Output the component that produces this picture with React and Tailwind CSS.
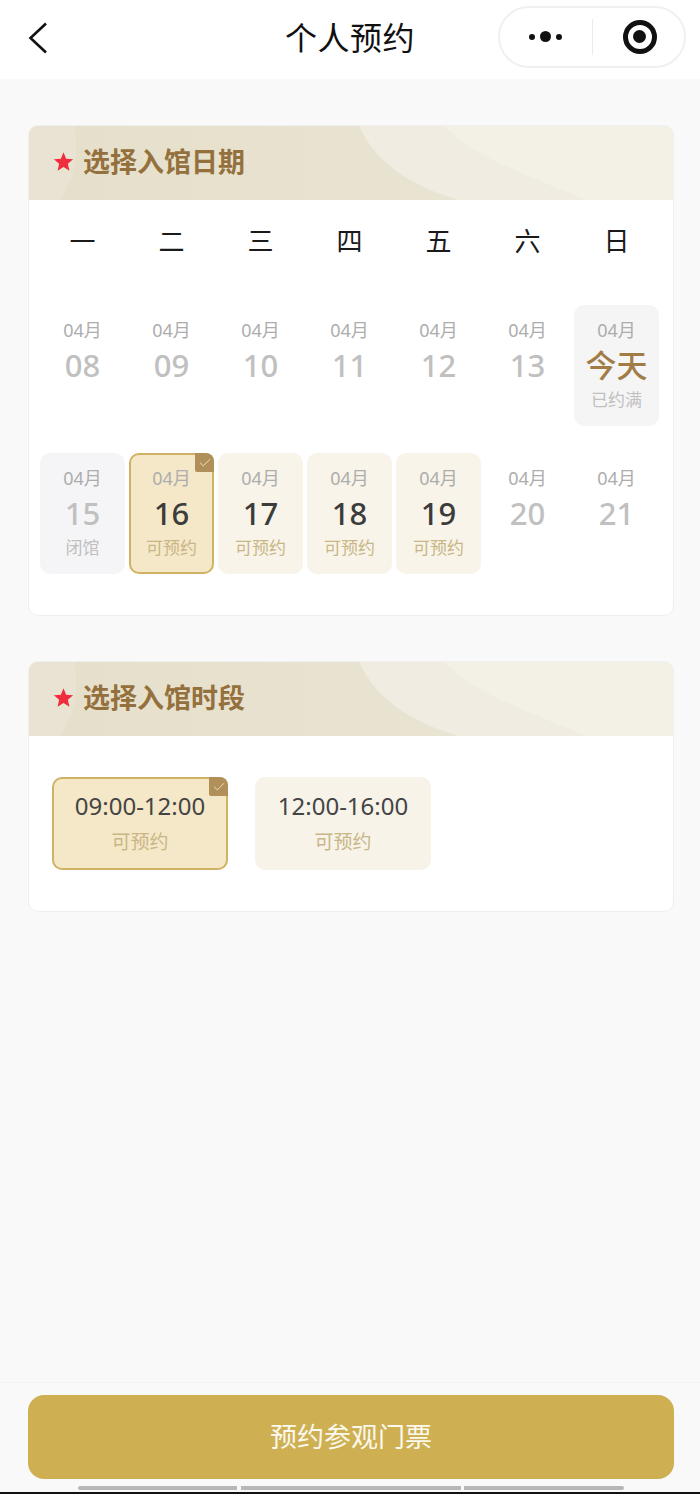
import { Check } from "lucide-react";

const weekDays = ["一", "二", "三", "四", "五", "六", "日"];

const firstWeek = [
  { day: "08" },
  { day: "09" },
  { day: "10" },
  { day: "11" },
  { day: "12" },
  { day: "13" },
  { day: "今天", note: "已约满", kind: "today" },
];

const secondWeek = [
  { day: "15", note: "闭馆", kind: "closed" },
  { day: "16", note: "可预约", kind: "selected" },
  { day: "17", note: "可预约", kind: "open" },
  { day: "18", note: "可预约", kind: "open" },
  { day: "19", note: "可预约", kind: "open" },
  { day: "20" },
  { day: "21" },
];

const CheckCorner = () => (
  <span className="absolute -right-[2px] -top-[2px] flex h-[19px] w-[19px] items-center justify-center rounded-tr-[8px] rounded-bl-[2px] bg-[#b08f58]">
    <Check size={14} strokeWidth={1.5} className="text-[#f3e8cf]" />
  </span>
);

const SectionCard = ({ title, children }) => (
  <section className="overflow-hidden rounded-[10px] border border-[#efefed] bg-white">
    <div className="relative flex h-[74px] items-center overflow-hidden bg-linear-to-r from-[#e5dfca] to-[#ebe6d7] pb-[3px] pl-[24px]">
      <svg viewBox="0 0 646 74" className="absolute inset-0 h-full w-full" preserveAspectRatio="none">
        <path d="M331 0 C350 40 385 60 431 74 L646 74 L646 0 Z" fill="#f0ece1" />
        <path d="M417 0 C445 30 500 50 560 74 L646 74 L646 0 Z" fill="#f3f0e6" />
        <path d="M0 0 L46 0 C50 26 46 56 30 74 L0 74 Z" fill="#e8e3d2" />
      </svg>
      <svg viewBox="0 0 24 24" className="relative h-[21px] w-[21px]">
        <path d="M12 1.5 L15 8.8 L23 9.5 L17 14.7 L18.8 22.5 L12 18.3 L5.2 22.5 L7 14.7 L1 9.5 L9 8.8 Z" fill="#ee2e3c" />
      </svg>
      <h2 className="relative ml-[9px] text-[27px] font-bold leading-none text-[#94703d]">{title}</h2>
    </div>
    {children}
  </section>
);

const DateCell = ({ day, note, kind }) => {
  const boxClass = {
    today: "bg-[#f5f5f6] pt-[13px]",
    closed: "bg-[#f5f5f7] pt-[13px]",
    selected: "border-2 border-[#d1b265] bg-[#f5e8c8] pt-[11px]",
    open: "bg-[#f8f4e9] pt-[13px]",
  }[kind] || "pt-[13px]";
  const dayClass = {
    today: "text-[#a17c45]",
    selected: "text-[#3c3c3c]",
    open: "text-[#3c3c3c]",
  }[kind] || "text-[#c0c0c0]";
  const noteClass = kind === "today" || kind === "closed" ? "text-[#c0c0c0]" : "text-[#c9b686]";

  return (
    <div className={`relative flex h-[121px] w-[85px] flex-col items-center rounded-[10px] ${boxClass}`}>
      {kind === "selected" && <CheckCorner />}
      <span className="text-[18px] leading-[24px] text-[#adadad]">04月</span>
      <span className={`mt-[4px] text-[31px] font-medium leading-[38px] ${dayClass}`}>{day}</span>
      {note && <span className={`mt-[4px] text-[17px] leading-[24px] ${noteClass}`}>{note}</span>}
    </div>
  );
};

const SlotCell = ({ time, selected }) => (
  <div
    className={`relative flex h-[93px] w-[176px] flex-col items-center rounded-[10px] ${
      selected ? "border-2 border-[#d1b265] bg-[#f5e8c8] pt-[11px]" : "bg-[#f7f3e9] pt-[13px]"
    }`}
  >
    {selected && <CheckCorner />}
    <span className="text-[24px] leading-[32px] text-[#444444]">{time}</span>
    <span className="mt-[6px] text-[19px] leading-[28px] text-[#c9b686]">可预约</span>
  </div>
);

export default function App() {
  return (
    <div className="flex h-[1494px] w-[700px] flex-col overflow-hidden bg-[#f9f9f9] font-['Noto_Sans','Noto_Sans_CJK_SC',sans-serif]">
      <header className="relative flex h-[79px] shrink-0 items-center justify-between bg-white pl-[28px] pr-[14px]">
        <svg viewBox="0 0 20 32" className="-mt-[4px] h-[32px] w-[20px] text-[#111111]">
          <polyline points="18,1.5 2.5,16 18,30.5" fill="none" stroke="currentColor" strokeWidth="2.6" />
        </svg>
        <h1 className="absolute left-0 w-[700px] pb-[4px] text-center text-[32px] leading-none tracking-[0.5px] text-[#111111]">个人预约</h1>
        <div className="-mt-[6px] flex h-[62px] w-[188px] items-center rounded-full border-2 border-[#f0f0ee]">
          <div className="flex w-[92px] items-center justify-center gap-[5px] pr-[2px]">
            <span className="h-[6px] w-[6px] rounded-full bg-[#111111]" />
            <span className="h-[11px] w-[11px] rounded-full bg-[#111111]" />
            <span className="h-[6px] w-[6px] rounded-full bg-[#111111]" />
          </div>
          <div className="h-[36px] w-px bg-[#ecebe4]" />
          <div className="flex flex-1 items-center justify-center pl-[2px]">
            <div className="flex h-[34px] w-[34px] items-center justify-center rounded-full border-[5px] border-[#111111]">
              <div className="h-[13px] w-[13px] rounded-full bg-[#111111]" />
            </div>
          </div>
        </div>
      </header>

      <main className="flex flex-1 flex-col gap-[45px] pl-[28px] pr-[26px] pt-[46px]">
        <SectionCard title="选择入馆日期">
          <div className="h-[415px] px-[11px]">
            <div className="grid h-[82px] grid-cols-[repeat(7,85px)] items-center gap-x-[4px]">
              {weekDays.map((d) => (
                <span key={d} className="text-center text-[26px] leading-none text-[#1a1a1a]">{d}</span>
              ))}
            </div>
            <div className="mt-[23px] grid grid-cols-[repeat(7,85px)] gap-x-[4px] gap-y-[27px]">
              {[...firstWeek, ...secondWeek].map((d) => (
                <DateCell key={d.day} {...d} />
              ))}
            </div>
          </div>
        </SectionCard>

        <SectionCard title="选择入馆时段">
          <div className="flex h-[175px] gap-[27px] px-[23px] pt-[41px]">
            <SlotCell time="09:00-12:00" selected />
            <SlotCell time="12:00-16:00" />
          </div>
        </SectionCard>
      </main>

      <footer className="flex h-[112px] shrink-0 flex-col border-t border-[#f3f3f3] bg-[#f9f9f9]">
        <button className="ml-[28px] mr-[26px] mt-[12px] flex h-[84px] items-center justify-center rounded-[16px] bg-[#ceb052] text-[27px] text-[#fbf8ee]">
          预约参观门票
        </button>
        <div className="mt-[7px] flex pl-[78px]">
          <div className="h-[4px] w-[159px] rounded-l-full bg-[#b7b7b7]" />
          <div className="ml-[4px] h-[4px] w-[220px] bg-[#b7b7b7]" />
          <div className="ml-[3px] h-[4px] w-[160px] rounded-r-full bg-[#b7b7b7]" />
        </div>
        <div className="mt-auto h-[2px] bg-[#111111]" />
      </footer>
    </div>
  );
}
